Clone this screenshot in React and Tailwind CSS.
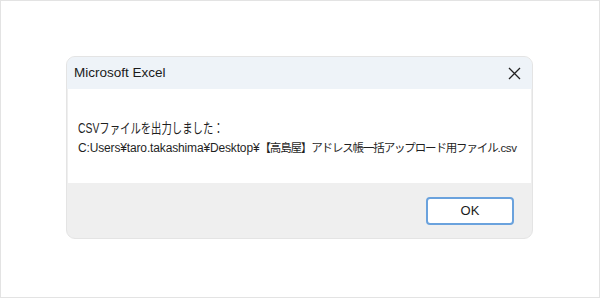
import React from 'react';

const jp = { fontFamily: '"Liberation Sans", "Noto Sans CJK JP", sans-serif' };

export default function App() {
  return (
    <div className="w-[600px] h-[298px] bg-white border border-[#e3e3e3] pl-[65px] pt-[55px]" style={jp}>
      {/* ダイアログ */}
      <div className="w-[467px] h-[183px] flex flex-col bg-[#efefef] border border-[#e4e4e4] rounded-[9px] overflow-hidden">
        {/* タイトルバー */}
        <div className="h-[32px] shrink-0 flex items-center justify-between bg-[#eef3f8] pl-[7px] pr-[11px]">
          <span className="text-[13.5px] text-[#1b1b1b]">Microsoft Excel</span>
          <svg width="13" height="13" viewBox="0 0 13 13" className="text-[#222]">
            <path d="M1 1L12 12M12 1L1 12" stroke="currentColor" strokeWidth="1.3" fill="none" />
          </svg>
        </div>

        {/* 本文 */}
        <div className="h-[94px] shrink-0 bg-white mx-[1px] pl-[10px] pt-[30px] text-[#1f1f1f]">
          <div className="text-[14px] leading-[18px] whitespace-nowrap scale-x-[0.74] origin-left">
            CSVファイルを出力しました：
          </div>
          <div className="leading-[18px] whitespace-nowrap mt-[1px]">
            <span className="text-[12px] tracking-[-0.15px]">C:Users¥taro.takashima¥Desktop¥</span>
            <span className="text-[11.5px] tracking-[-1.15px]">【高島屋】アドレス帳一括アップロード用ファイル</span>
            <span className="text-[11.5px] tracking-[-0.3px]">.csv</span>
          </div>
        </div>

        {/* フッター */}
        <div className="flex-1 flex items-start justify-end pt-[14px] pr-[18px]">
          <button className="w-[88px] h-[28px] bg-white border-2 border-[#6aa2dd] rounded-[4px] text-[13px] text-[#1b1b1b]">
            OK
          </button>
        </div>
      </div>
    </div>
  );
}
